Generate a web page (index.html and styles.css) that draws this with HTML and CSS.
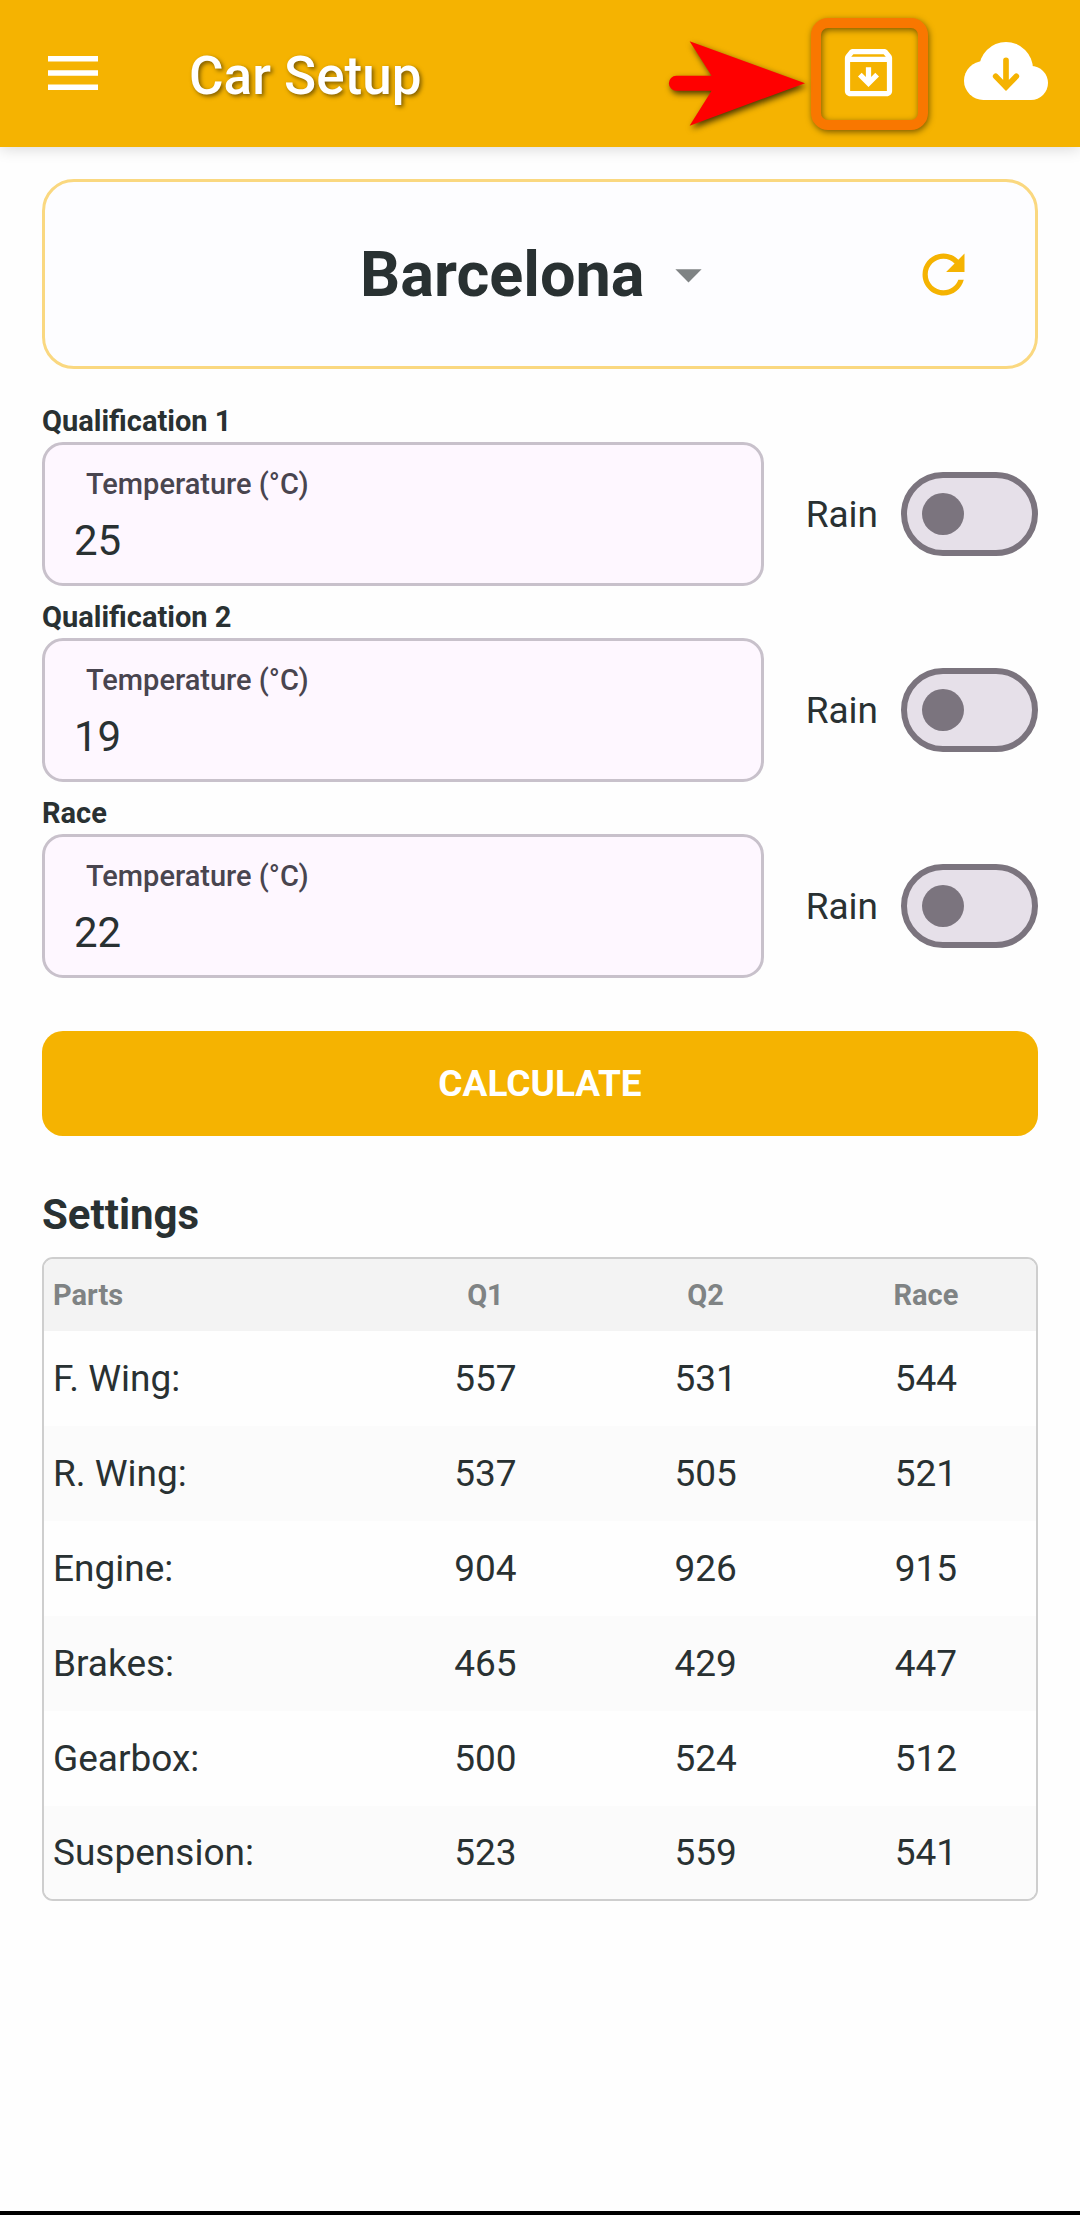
FILE: index.html
```html
<!DOCTYPE html>
<html lang="en">
<head>
    <meta charset="UTF-8">
    <meta name="viewport" content="width=device-width, initial-scale=1.0">
    <title>Car Setup</title>
    <link rel="stylesheet" href="styles.css">
</head>
<body>
    <header class="header">
        <button class="icon-button" type="button" aria-label="Menu">
            <svg class="menu-icon" viewBox="0 0 50 34" fill="#fff">
                <path d="M0 0h50v5.6H0zM0 14.2h50v5.6H0zM0 28.4h50V34H0z"/>
            </svg>
        </button>
        <h1>Car Setup</h1>
        <div class="actions">
            <button class="icon-button archive" type="button" aria-label="Archive">
                <svg class="icon" viewBox="0 0 24 24" fill="#fff">
                    <path d="M20.54 5.23l-1.39-1.68C18.88 3.21 18.47 3 18 3H6c-.47 0-.88.21-1.16.55L3.46 5.23C3.17 5.57 3 6.02 3 6.5V19c0 1.1.9 2 2 2h14c1.1 0 2-.9 2-2V6.5c0-.48-.17-.93-.46-1.27zM6.24 5h11.52l.83 1H5.42l.82-1zM5 19V8h14v11H5zm11-5.5l-4 4-4-4 1.41-1.41L11 13.67V10h2v3.67l1.59-1.59L16 13.5z"/>
                </svg>
                <span class="highlight"></span>
                <svg class="pointer" viewBox="0 0 409 254" fill="#f00">
                    <path d="M62 0L409 126L62 254L128 149H22a22 22 0 0 1 0-45H128z"/>
                </svg>
            </button>
            <button class="icon-button" type="button" aria-label="Download">
                <svg class="cloud-icon" viewBox="0 0 252 186">
                    <g fill="#fff">
                        <circle cx="126" cy="81" r="81"/>
                        <circle cx="58" cy="116" r="58"/>
                        <circle cx="201" cy="123" r="51"/>
                        <path d="M58 70h143v104H58z"/>
                    </g>
                    <path d="M126 55v80M95 103l31 32 31-32" fill="none" stroke="#f5b301" stroke-width="17" stroke-linecap="round"/>
                </svg>
            </button>
        </div>
    </header>

    <main class="content">
        <section class="track">
            <div class="track-picker">
                <select class="track-select" aria-label="Track">
                    <option>Barcelona</option>
                </select>
                <svg class="icon caret" viewBox="0 0 24 24" fill="#7f8384">
                    <path d="M7 10l5 5 5-5z"/>
                </svg>
            </div>
            <button class="icon-button refresh" type="button" aria-label="Refresh">
                <svg class="icon" viewBox="0 0 24 24" fill="#f5b301">
                    <path d="M17.65 6.35C16.2 4.9 14.21 4 12 4c-4.42 0-7.99 3.58-7.99 8s3.57 8 7.99 8c3.73 0 6.84-2.55 7.73-6h-2.08c-.82 2.33-3.04 4-5.65 4-3.31 0-6-2.69-6-6s2.69-6 6-6c1.66 0 3.14.69 4.22 1.78L13 11h7V4l-2.35 2.35z"/>
                </svg>
            </button>
        </section>

        <form class="sessions">
            <section class="session">
                <h2>Qualification 1</h2>
                <div class="session-row">
                    <div class="field">
                        <label for="temp-q1">Temperature (°C)</label>
                        <input id="temp-q1" type="text" inputmode="numeric" value="25">
                    </div>
                    <label class="rain">Rain <input class="switch" type="checkbox"></label>
                </div>
            </section>
            <section class="session">
                <h2>Qualification 2</h2>
                <div class="session-row">
                    <div class="field">
                        <label for="temp-q2">Temperature (°C)</label>
                        <input id="temp-q2" type="text" inputmode="numeric" value="19">
                    </div>
                    <label class="rain">Rain <input class="switch" type="checkbox"></label>
                </div>
            </section>
            <section class="session">
                <h2>Race</h2>
                <div class="session-row">
                    <div class="field">
                        <label for="temp-race">Temperature (°C)</label>
                        <input id="temp-race" type="text" inputmode="numeric" value="22">
                    </div>
                    <label class="rain">Rain <input class="switch" type="checkbox"></label>
                </div>
            </section>
            <button class="calculate" type="button">CALCULATE</button>
        </form>

        <h2 class="settings-title">Settings</h2>
        <div class="table-box">
            <table class="settings">
                <thead>
                    <tr><th>Parts</th><th>Q1</th><th>Q2</th><th>Race</th></tr>
                </thead>
                <tbody>
                    <tr><td>F. Wing:</td><td>557</td><td>531</td><td>544</td></tr>
                    <tr><td>R. Wing:</td><td>537</td><td>505</td><td>521</td></tr>
                    <tr><td>Engine:</td><td>904</td><td>926</td><td>915</td></tr>
                    <tr><td>Brakes:</td><td>465</td><td>429</td><td>447</td></tr>
                    <tr><td>Gearbox:</td><td>500</td><td>524</td><td>512</td></tr>
                    <tr><td>Suspension:</td><td>523</td><td>559</td><td>541</td></tr>
                </tbody>
            </table>
        </div>
    </main>
    <div class="bottom-bar"></div>
</body>
</html>
```

FILE: styles.css
```css
* {
    box-sizing: border-box;
}

body {
    margin: 0;
    min-height: 100vh;
    display: flex;
    flex-direction: column;
    background-color: #fefefe;
    color: #293132;
    font-family: Roboto, sans-serif;
    font-size: 37px;
}

h1, h2 {
    margin: 0;
}

input, select, button {
    font-family: inherit;
    color: inherit;
}

.header {
    display: flex;
    align-items: center;
    height: 147px;
    padding: 0 32px 2px 48px;
    background-color: #f5b301;
    box-shadow: 0 2px 14px rgba(0, 0, 0, 0.15);
}

.header h1 {
    flex: 1;
    padding: 6px 0 0 91px;
    color: #fff;
    font-size: 53px;
    font-weight: 500;
    text-shadow: 2px 2px 4px rgba(0, 0, 0, 0.5);
}

.actions {
    display: flex;
    align-items: center;
    gap: 64px;
}

.icon-button {
    display: block;
    padding: 0;
    border: none;
    background: none;
    cursor: pointer;
}

.icon-button svg {
    display: block;
}

.icon {
    width: 63px;
    height: 63px;
}

.menu-icon {
    width: 50px;
    height: 34px;
}

.cloud-icon {
    width: 84px;
    height: 62px;
}

.archive {
    position: relative;
}

/* callout around the archive button */
.highlight {
    position: absolute;
    top: -23px;
    left: -26px;
    width: 117px;
    height: 112px;
    border: 10px solid #f97700;
    border-radius: 17px;
    filter: drop-shadow(1px 2px 3px rgba(0, 0, 0, 0.5));
}

.icon-button .pointer {
    position: absolute;
    top: 0;
    right: 95px;
    width: 136px;
    height: 85px;
    overflow: visible;
    filter: drop-shadow(2px 3px 3px rgba(0, 0, 0, 0.7));
}

.content {
    flex: 1;
    padding: 32px 42px;
}

.track {
    display: grid;
    grid-template-columns: 1fr auto 1fr;
    align-items: center;
    height: 190px;
    padding: 0 60px;
    border: 3px solid #fad880;
    border-radius: 32px;
    background-color: #fdfdff;
}

.track-picker {
    grid-column: 2;
    display: flex;
    align-items: center;
    gap: 12px;
}

.track-select {
    appearance: none;
    padding: 0;
    border: none;
    background: none;
    font-size: 63px;
    font-weight: 700;
}

.refresh {
    justify-self: end;
}

.sessions {
    display: flex;
    flex-direction: column;
    gap: 10px;
    margin-top: 31px;
}

.session h2 {
    font-size: 29px;
    line-height: 42px;
}

.session-row {
    display: flex;
    align-items: center;
    gap: 42px;
}

.field {
    flex: 1;
    display: flex;
    flex-direction: column;
    gap: 12px;
    height: 144px;
    padding: 19px 29px 0;
    border: 3px solid #c8c1cb;
    border-radius: 21px;
    background-color: #fef7ff;
}

.field label {
    padding-left: 12px;
    color: #49454f;
    font-size: 29px;
    font-weight: 500;
    line-height: 40px;
}

.field input {
    width: 100%;
    height: 48px;
    padding: 0;
    border: none;
    outline: none;
    background: none;
    font-size: 42px;
}

.rain {
    display: flex;
    align-items: center;
    gap: 23px;
}

.switch {
    appearance: none;
    display: flex;
    align-items: center;
    width: 137px;
    height: 84px;
    margin: 0;
    padding: 0 15px;
    border: 6px solid #7b747e;
    border-radius: 42px;
    background-color: #e6e0e9;
}

.switch::before {
    content: "";
    width: 42px;
    height: 42px;
    border-radius: 50%;
    background-color: #7b747e;
}

.switch:checked {
    justify-content: flex-end;
}

.calculate {
    height: 105px;
    margin-top: 43px;
    border: none;
    border-radius: 21px;
    background-color: #f5b301;
    color: #fff;
    font-size: 37px;
    font-weight: 700;
    cursor: pointer;
}

.settings-title {
    margin: 54px 0 17px;
    font-size: 42px;
    line-height: 50px;
}

.table-box {
    overflow: hidden;
    border: 2px solid #cecece;
    border-radius: 11px;
}

.settings {
    width: 100%;
    table-layout: fixed;
    border-collapse: collapse;
    text-align: center;
}

.settings th {
    width: 22.2%;
    height: 72px;
    padding: 0;
    background-color: #f3f3f3;
    color: #7f8384;
    font-size: 29px;
}

.settings td {
    height: 95px;
    padding: 0;
}

.settings tr:last-child td {
    height: 93px;
}

.settings th:first-child {
    width: auto;
}

.settings th:first-child,
.settings td:first-child {
    padding-left: 9px;
    text-align: left;
}

.settings tbody tr:nth-child(even) {
    background-color: #fbfbfb;
}

.bottom-bar {
    height: 4px;
    background-color: #000;
}
```
